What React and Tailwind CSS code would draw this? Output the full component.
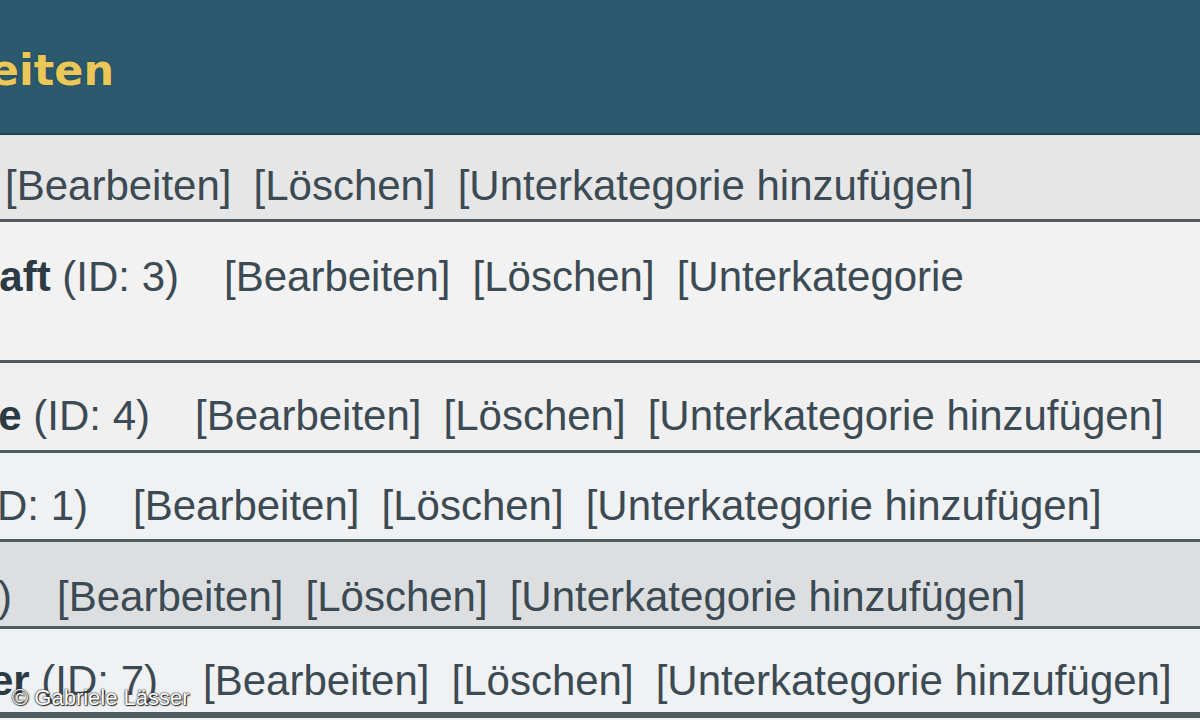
import React from 'react';

const rows = [
  { id: 2, name: 'Technik', nameCls: '-ml-[640px]', rowCls: 'h-[85px] pt-[25px] bg-[#e6e6e6]' },
  { id: 3, name: 'Wissenschaft', nameCls: '-ml-[421px]', rowCls: 'h-[141px] pt-[31px] bg-[#f2f2f2]', wrap: true },
  { id: 4, name: 'Software', nameCls: '-ml-[450px]', rowCls: 'h-[90px] pt-[29px] bg-[#f0f0f1]' },
  { id: 1, name: 'Hardware', nameCls: '-ml-[512px]', rowCls: 'h-[89px] pt-[29px] bg-[#f0f1f3]' },
  { id: 5, name: 'Spiele', nameCls: '-ml-[588px]', rowCls: 'h-[87px] pt-[31px] bg-[#dcdee0]' },
  { id: 7, name: 'Computer', nameCls: '-ml-[442px]', rowCls: 'h-[89px] pt-[28px] bg-[#f0f1f2] border-b-[6px]' },
];

const ActionLinks = ({ wrap }) => (
  <div className="flex items-start gap-[22px] ml-[45px] whitespace-nowrap">
    <a className="cursor-pointer">[Bearbeiten]</a>
    <a className="cursor-pointer">[Löschen]</a>
    <a className="cursor-pointer">{wrap ? '[Unterkategorie' : '[Unterkategorie hinzufügen]'}</a>
  </div>
);

const CategoryRow = ({ row }) => (
  <div className={`flex items-start border-b-[3px] border-[#4e5b61] overflow-hidden ${row.rowCls}`}>
    <span className={`shrink-0 w-[600px] text-right whitespace-nowrap ${row.nameCls}`}>
      <b className="text-[#2b3a43]">{row.name}</b> (ID: {row.id})
    </span>
    <ActionLinks wrap={row.wrap} />
  </div>
);

export default function App() {
  return (
    <div className="relative w-[1200px] h-[720px] overflow-hidden bg-[#f2f2f2] font-['Liberation_Sans',Arial,sans-serif]">
      {/* page title bar */}
      <div className="h-[135px] bg-[#2b5a6e] flex items-start pt-[49px] overflow-hidden border-b-2 border-[#1e4352]">
        <span className="shrink-0 w-[600px] -ml-[486px] text-right whitespace-nowrap font-['DejaVu_Sans',Verdana,sans-serif] text-[43px] leading-none font-bold text-[#ebc757] [text-shadow:0_0_2px_#1d4050]">
          Kategorien bearbeiten
        </span>
      </div>
      <div className="h-[2px] bg-[#dde7ec]" />

      {/* category list */}
      <div className="text-[42px] leading-[48px] text-[#3b4a53]">
        {rows.map((row) => (
          <CategoryRow key={row.id} row={row} />
        ))}
      </div>

      <span className="absolute left-[12px] top-[685px] text-[22px] leading-[26px] text-white [text-shadow:0_0_2px_#1a1a1a,0_0_1px_#1a1a1a,1px_1px_1px_#333]">
        © Gabriele Lässer
      </span>
    </div>
  );
}
